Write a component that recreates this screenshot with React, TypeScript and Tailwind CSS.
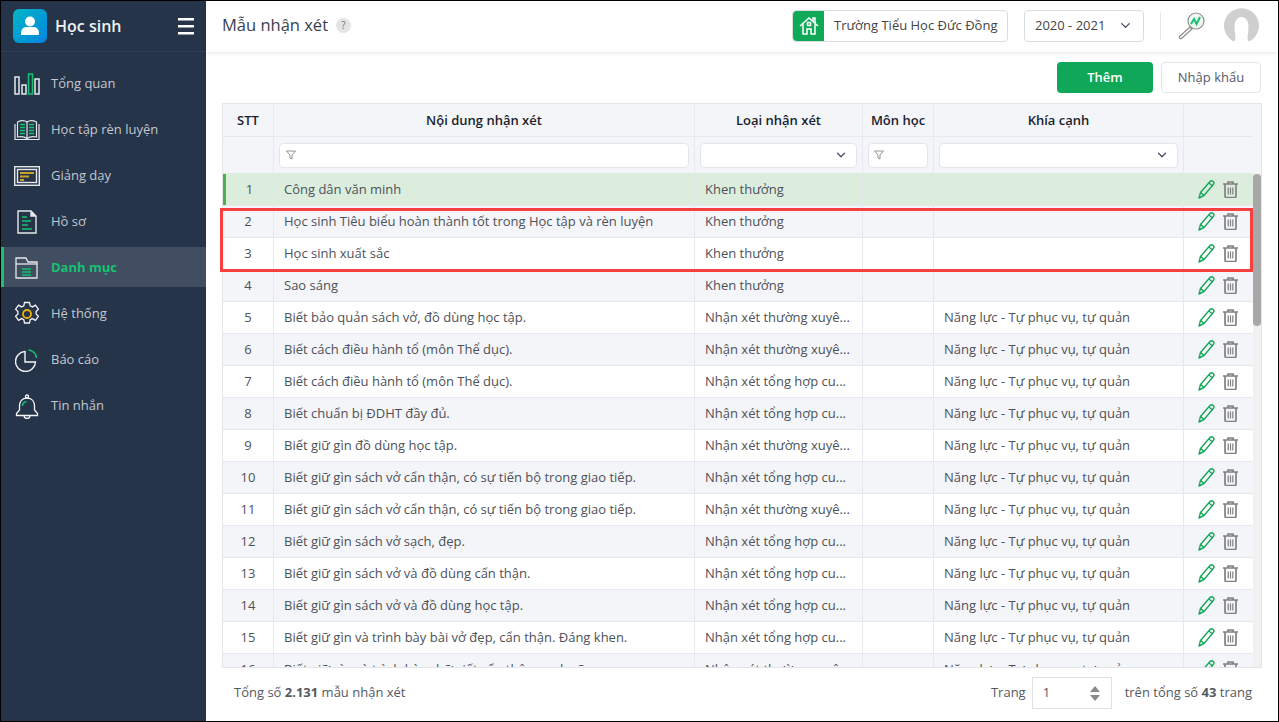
import { ChevronDown } from "lucide-react";

const font = "font-['Open_Sans','Noto_Sans',sans-serif]";

const nhanXetTX = "Nhận xét thường xuyê...";
const nhanXetTH = "Nhận xét tổng hợp cu...";
const tuPhucVu = "Năng lực - Tự phục vụ, tự quản";

const rows = [
  { no: 1, text: "Công dân văn minh", type: "Khen thưởng", aspect: "" },
  { no: 2, text: "Học sinh Tiêu biểu hoàn thành tốt trong Học tập và rèn luyện", type: "Khen thưởng", aspect: "" },
  { no: 3, text: "Học sinh xuất sắc", type: "Khen thưởng", aspect: "" },
  { no: 4, text: "Sao sáng", type: "Khen thưởng", aspect: "" },
  { no: 5, text: "Biết bảo quản sách vở, đồ dùng học tập.", type: nhanXetTX, aspect: tuPhucVu },
  { no: 6, text: "Biết cách điều hành tổ (môn Thể dục).", type: nhanXetTX, aspect: tuPhucVu },
  { no: 7, text: "Biết cách điều hành tổ (môn Thể dục).", type: nhanXetTH, aspect: tuPhucVu },
  { no: 8, text: "Biết chuẩn bị ĐDHT đầy đủ.", type: nhanXetTH, aspect: tuPhucVu },
  { no: 9, text: "Biết giữ gìn đồ dùng học tập.", type: nhanXetTX, aspect: tuPhucVu },
  { no: 10, text: "Biết giữ gìn sách vở cẩn thận, có sự tiến bộ trong giao tiếp.", type: nhanXetTH, aspect: tuPhucVu },
  { no: 11, text: "Biết giữ gìn sách vở cẩn thận, có sự tiến bộ trong giao tiếp.", type: nhanXetTX, aspect: tuPhucVu },
  { no: 12, text: "Biết giữ gìn sách vở sạch, đẹp.", type: nhanXetTH, aspect: tuPhucVu },
  { no: 13, text: "Biết giữ gìn sách vở và đồ dùng cẩn thận.", type: nhanXetTH, aspect: tuPhucVu },
  { no: 14, text: "Biết giữ gìn sách vở và đồ dùng học tập.", type: nhanXetTH, aspect: tuPhucVu },
  { no: 15, text: "Biết giữ gìn và trình bày bài vở đẹp, cẩn thận. Đáng khen.", type: nhanXetTH, aspect: tuPhucVu },
  { no: 16, text: "Biết giữ gìn và trình bày chữ viết cẩn thận, sạch sẽ.", type: nhanXetTX, aspect: tuPhucVu },
];

function ChartIcon() {
  return (
    <svg width="26" height="22" viewBox="0 0 26 22" fill="none" stroke="#e5e7eb" strokeWidth="1.5">
      <rect x="1" y="4" width="4" height="17" />
      <rect x="8" y="12" width="4" height="9" />
      <rect x="14.500" y="1" width="4" height="20" stroke="#16c172" />
      <rect x="21" y="6" width="4" height="15" />
    </svg>
  );
}

function BookIcon() {
  return (
    <svg width="26" height="22" viewBox="0 0 26 22" fill="none" stroke="#e5e7eb" strokeWidth="1.2">
      <path d="M1 5v15.500h24V5" />
      <path d="M3.500 3v15c4-.8 7-.4 9.500 1.500 2.500-1.900 5.500-2.300 9.500-1.500V3C18.500 1 15 1.500 13 3 11 1.500 7.500 1 3.500 3z" />
      <path d="M13 3v16.500" />
      <path d="M6 5.500h5M6 8.500h5M6 11.500h5M6 14.500h5M15 5.500h5M15 8.500h5M15 11.500h5M15 14.500h5" stroke="#16c172" strokeWidth="1.600" />
    </svg>
  );
}

function BoardIcon() {
  return (
    <svg width="26" height="20" viewBox="0 0 26 20" fill="none" stroke="#e5e7eb" strokeWidth="1.400">
      <rect x=".7" y=".7" width="24.600" height="18.600" />
      <rect x="3.500" y="3.500" width="19" height="13" />
      <path d="M6 7h14M6 10.500h9M6 14h4" stroke="#c9a227" strokeWidth="2" />
    </svg>
  );
}

function FileIcon() {
  return (
    <svg width="20" height="24" viewBox="0 0 20 24" fill="none" stroke="#e5e7eb" strokeWidth="1.400">
      <path d="M1 1h13l5 5v17H1z" />
      <path d="M14 1v5h5" fill="#e5e7eb" />
      <path d="M5 7h5M5 11h9M5 15h6M5 19h10" stroke="#16c172" />
    </svg>
  );
}

function FolderIcon() {
  return (
    <svg width="23" height="22" viewBox="0 0 23 22" fill="none" stroke="#e5e7eb" strokeWidth="1.300">
      <path d="M1 1h10l2 4h9v16H1z" />
      <path d="M1 7h21" />
      <path d="M7 12h9M7 15h9M7 18h9" stroke="#16c172" strokeWidth="1.500" />
    </svg>
  );
}

function GearIcon() {
  return (
    <svg width="26" height="26" viewBox="0 0 26 26" fill="none" stroke="#f3f4f6" strokeWidth="1.300">
      <path d="M10.500 1.500h5l.7 3.400 2.200 1 3-1.800 3 4-2.300 2.400v2.500l2.300 2.400-3 4-3-1.800-2.200 1-.7 3.400h-5l-.7-3.400-2.200-1-3 1.800-3-4 2.300-2.400v-2.500L1.600 8.100l3-4 3 1.800 2.200-1z" />
      <circle cx="13" cy="13" r="4" stroke="#eab308" strokeWidth="1.800" />
    </svg>
  );
}

function PieIcon() {
  return (
    <svg width="23" height="23" viewBox="0 0 23 23" fill="none" stroke="#f3f4f6" strokeWidth="1.400">
      <path d="M10 2.500a10 10 0 1 0 10.500 10.500H10z" />
      <path d="M13.500 1a8.500 8.500 0 0 1 8 8" stroke="#16c172" />
    </svg>
  );
}

function BellIcon() {
  return (
    <svg width="24" height="25" viewBox="0 0 24 25" fill="none" stroke="#f3f4f6" strokeWidth="1.300">
      <circle cx="12" cy="2.500" r="1.500" />
      <path d="M12 4c-5 0-7.500 3.500-7.500 8v4L1.500 19.500v2h21v-2L19.500 16v-4c0-4.500-2.500-8-7.500-8z" />
      <path d="M9 21.500a3 3 0 0 0 6 0" />
      <path d="M7.500 12c0-2.500 1.500-4 4-4.500" stroke="#16c172" strokeWidth="1.500" />
    </svg>
  );
}

const navItems = [
  { label: "Tổng quan", icon: <ChartIcon /> },
  { label: "Học tập rèn luyện", icon: <BookIcon /> },
  { label: "Giảng dạy", icon: <BoardIcon /> },
  { label: "Hồ sơ", icon: <FileIcon /> },
  { label: "Danh mục", icon: <FolderIcon />, active: true },
  { label: "Hệ thống", icon: <GearIcon /> },
  { label: "Báo cáo", icon: <PieIcon /> },
  { label: "Tin nhắn", icon: <BellIcon /> },
];

function Sidebar() {
  return (
    <aside className="w-[205px] shrink-0 bg-[#253449] flex flex-col">
      <div className="h-[51px] shrink-0 flex items-center pl-3 pr-3 border-b border-[#2f3e54]">
        <div className="w-[34px] h-[34px] rounded-md bg-gradient-to-br from-[#09b5c4] to-[#0a84e0] flex items-center justify-center">
          <svg width="18" height="20" viewBox="0 0 18 20" fill="#fff">
            <circle cx="9" cy="5.500" r="5" />
            <path d="M1 19c-1 0-1-1-1-2 0-4 3-6 5-6h8c2 0 5 2 5 6 0 1 0 2-1 2z" />
          </svg>
        </div>
        <span className="ml-2 text-[16px] font-semibold text-[#eef0f3]">Học sinh</span>
        <svg className="ml-auto" width="16" height="17" viewBox="0 0 16 17" fill="#fff">
          <rect width="16" height="2.500" y="0" />
          <rect width="16" height="2.500" y="7" />
          <rect width="16" height="2.500" y="14" />
        </svg>
      </div>
      <nav className="flex flex-col mt-[11px]">
        {navItems.map((item) => (
          <div
            key={item.label}
            className={`h-[40px] mb-[6px] pt-[2px] flex items-center border-l-[3px] ${item.active ? "border-[#16c172] bg-[#414e62]" : "border-transparent"}`}
          >
            <span className="w-[47px] pr-[2px] shrink-0 flex items-center justify-center">{item.icon}</span>
            <span className={`text-[13px] ${item.active ? "font-bold text-[#16c172]" : "text-[#c3c8cf]"}`}>{item.label}</span>
          </div>
        ))}
      </nav>
    </aside>
  );
}

function Header() {
  return (
    <header className="h-[51px] shrink-0 bg-white flex items-center pl-4 pr-[19px] pb-[2px] shadow-[0_1px_4px_rgba(0,0,0,0.1)] relative z-10">
      <h1 className="text-[16.5px] font-medium text-[#3a3f4b]">Mẫu nhận xét</h1>
      <span className="ml-2 w-[15px] h-[15px] rounded-full bg-[#e4e4e4] text-[#777] text-[10px] flex items-center justify-center">?</span>
      <div className="ml-auto h-[32px] w-[216px] flex items-stretch border border-[#d8dbe0] rounded text-[13px] text-[#444]">
        <span className="w-[31px] bg-[#0fa958] rounded-l flex items-center justify-center">
          <svg width="20" height="20" viewBox="0 0 20 20" fill="none" stroke="#fff" strokeWidth="1.500">
            <path d="M1 10 10 2l9 8M4 8v10h4v-5h4v5h4V8" />
            <path d="M14 5V2h2v5" />
            <rect x="8.500" y="6.500" width="3" height="3" />
          </svg>
        </span>
        <span className="flex-1 flex items-center pl-[10px]">Trường Tiểu Học Đức Đồng</span>
      </div>
      <div className="ml-4 h-[32px] w-[120px] flex items-center justify-between border border-[#d8dbe0] rounded px-[10px] text-[13px] text-[#444]">
        2020 - 2021
        <ChevronDown size={15} className="text-[#4a4f66]" strokeWidth={2.2} />
      </div>
      <div className="ml-4 w-px h-[28px] bg-[#e5e7eb]" />
      <svg className="ml-4" width="28" height="28" viewBox="0 0 28 28" fill="none">
        <circle cx="19" cy="9" r="8" stroke="#8f8f8f" strokeWidth="1.200" fill="#eef8f1" />
        <path d="m13 15-10.500 9.500a1.500 1.500 0 0 0 2 2L15 17z" stroke="#8a8a8a" strokeWidth="1.200" fill="#fff" />
        <path d="m14 12 3-5 2.500 5 3.500-7" stroke="#16c172" strokeWidth="2" />
      </svg>
      <svg className="ml-[19px]" width="35" height="35" viewBox="0 0 35 35">
        <path
          d="M10 33.500A17.500 17.500 0 1 1 25 33.500C22 31 24.500 27 24.500 17.500a7 8.500 0 0 0-14 0C10.500 27 13 31 10 33.500z"
          fill="#cfcfcf"
        />
      </svg>
    </header>
  );
}

function FilterIcon() {
  return (
    <svg width="10" height="10" viewBox="0 0 10 10" fill="none" stroke="#888" strokeWidth="0.900">
      <path d="M.5 1h9L6 5v4L4 8V5z" />
    </svg>
  );
}

function PencilIcon() {
  return (
    <svg width="17" height="19" viewBox="0 0 17 19" fill="none" stroke="#16a75c" strokeWidth="1.400" strokeLinejoin="round">
      <path d="M1 18l1.500-5.500L12 1.500c1-1 2.300-.8 3.200 0 .9.900 1 2 .1 3L6 15.500z" />
      <path d="M2.500 12.500 6 15.500M11 3l3.500 3" />
    </svg>
  );
}

function TrashIcon() {
  return (
    <svg width="15" height="17" viewBox="0 0 15 17" fill="none" stroke="#808080" strokeWidth="1.700">
      <path d="M0 3h15M5 3V1h5v2" />
      <path d="M2 3v12a1.500 1.500 0 0 0 1.500 1.500h8A1.500 1.500 0 0 0 13 15V3" />
      <path d="M5.200 6.500v7M7.500 6.500v7M9.800 6.500v7" strokeWidth="1.200" />
    </svg>
  );
}

const cellBorder = "border-r border-[#e6e8ee]";

function TableHead() {
  return (
    <div className="bg-[#f4f5f9] text-[13px] font-semibold text-[#1a1f2e]">
      <div className="h-[33px] pt-px flex border-b border-[#e6e8ee]">
        <div className={`w-[51px] ${cellBorder} flex items-center justify-center`}>STT</div>
        <div className={`w-[421px] ${cellBorder} flex items-center justify-center`}>Nội dung nhận xét</div>
        <div className={`w-[168px] ${cellBorder} flex items-center justify-center`}>Loại nhận xét</div>
        <div className={`w-[71px] ${cellBorder} flex items-center justify-center`}>Môn học</div>
        <div className={`w-[250px] ${cellBorder} flex items-center justify-center`}>Khía cạnh</div>
        <div className="w-[69px]" />
      </div>
      <div className="h-[36px] flex">
        <div className={`w-[51px] ${cellBorder}`} />
        <div className={`w-[421px] ${cellBorder} px-[5px] flex items-center`}>
          <div className="w-full h-[25px] bg-white rounded border border-[#e3e5ea] flex items-center pl-[6px]"><FilterIcon /></div>
        </div>
        <div className={`w-[168px] ${cellBorder} px-[5px] flex items-center`}>
          <div className="w-full h-[25px] bg-white rounded border border-[#e3e5ea] flex items-center justify-end pr-[8px]"><ChevronDown size={14} strokeWidth={2.2} className="text-[#4a4f66]" /></div>
        </div>
        <div className={`w-[71px] ${cellBorder} px-[5px] flex items-center`}>
          <div className="w-full h-[25px] bg-white rounded border border-[#e3e5ea] flex items-center pl-[5px]"><FilterIcon /></div>
        </div>
        <div className={`w-[250px] ${cellBorder} px-[5px] flex items-center`}>
          <div className="w-full h-[25px] bg-white rounded border border-[#e3e5ea] flex items-center justify-end pr-[8px]"><ChevronDown size={14} strokeWidth={2.2} className="text-[#4a4f66]" /></div>
        </div>
        <div className="w-[69px]" />
      </div>
    </div>
  );
}

function TableRow({ row }: { row: (typeof rows)[number] }) {
  const bg = row.no === 1 ? "bg-[#dcedde]" : row.no % 2 === 0 ? "bg-[#f4f5f9]" : "bg-white";
  const height = row.no === 1 ? "h-[33px] pt-px" : "h-[32px]";
  return (
    <div className={`${height} shrink-0 flex border-b border-[#e6e8ee] text-[13px] text-[#4d5158] ${bg}`}>
      <div className={`w-[51px] ${cellBorder} flex items-center justify-center ${row.no === 1 ? "border-l-[3px] border-l-[#4caf50]" : ""}`}>{row.no}</div>
      <div className={`w-[421px] ${cellBorder} flex items-center pl-[10px] whitespace-nowrap overflow-hidden`}>{row.text}</div>
      <div className={`w-[168px] ${cellBorder} flex items-center pl-[10px] whitespace-nowrap overflow-hidden`}>{row.type}</div>
      <div className={`w-[71px] ${cellBorder}`} />
      <div className={`w-[250px] ${cellBorder} flex items-center pl-[10px] whitespace-nowrap overflow-hidden`}>{row.aspect}</div>
      <div className="w-[69px] flex items-center pl-[14px] gap-[8px]">
        <PencilIcon />
        <TrashIcon />
      </div>
    </div>
  );
}

function DataTable() {
  return (
    <div className="relative">
      <div className="h-[565px] border border-[#e3e5ea] overflow-hidden flex flex-col">
        <div className="flex">
          <div className="w-[1030px]"><TableHead /></div>
          <div className="flex-1 bg-[#f4f5f9]" />
        </div>
        <div className="flex flex-1 min-h-0">
          <div className="w-[1030px] flex flex-col overflow-hidden">
            {rows.map((row) => (
              <TableRow key={row.no} row={row} />
            ))}
          </div>
          <div className="flex-1 bg-[#f1f1f1] pt-px">
            <div className="h-[152px] rounded-sm bg-[#a8a8a8]" />
          </div>
        </div>
      </div>
      {/* red highlight over rows 2-3 */}
      <div className="absolute left-[-2px] top-[105px] w-[1033px] h-[64px] border-[3px] border-[#f9403f] pointer-events-none" />
    </div>
  );
}

function Footer() {
  return (
    <footer className="flex-1 flex items-center justify-between pl-[28px] pr-[26px] pb-[3px] text-[13px] text-[#55595f]">
      <span>Tổng số <b>2.131</b> mẫu nhận xét</span>
      <div className="flex items-center">
        <span>Trang</span>
        <div className="ml-[6px] w-[80px] h-[32px] border border-[#dfe1e5] flex items-center justify-between pl-[10px] pr-[11px]">
          <span>1</span>
          <span className="flex flex-col gap-[3px]">
            <span className="w-0 h-0 border-x-[5px] border-x-transparent border-b-[6px] border-b-[#8a8a8a]" />
            <span className="w-0 h-0 border-x-[5px] border-x-transparent border-t-[6px] border-t-[#8a8a8a]" />
          </span>
        </div>
        <span className="ml-[13px]">trên tổng số <b>43</b> trang</span>
      </div>
    </footer>
  );
}

export default function App() {
  return (
    <div className={`${font} w-[1279px] h-[722px] overflow-hidden border border-black flex bg-white`}>
      <Sidebar />
      <main className="flex-1 min-w-0 flex flex-col">
        <Header />
        <div className="h-[51px] shrink-0 flex items-center justify-end gap-2 pr-[17px] pb-[1px]">
          <button className="w-[96px] h-[31px] pt-px rounded bg-[#10a858] text-white text-[13px] font-semibold">Thêm</button>
          <button className="w-[100px] h-[31px] pt-px rounded border border-[#e3e5ea] bg-white text-[#55596a] text-[13px]">Nhập khẩu</button>
        </div>
        <div className="pl-[16px] pr-[16px]">
          <DataTable />
        </div>
        <Footer />
      </main>
    </div>
  );
}
